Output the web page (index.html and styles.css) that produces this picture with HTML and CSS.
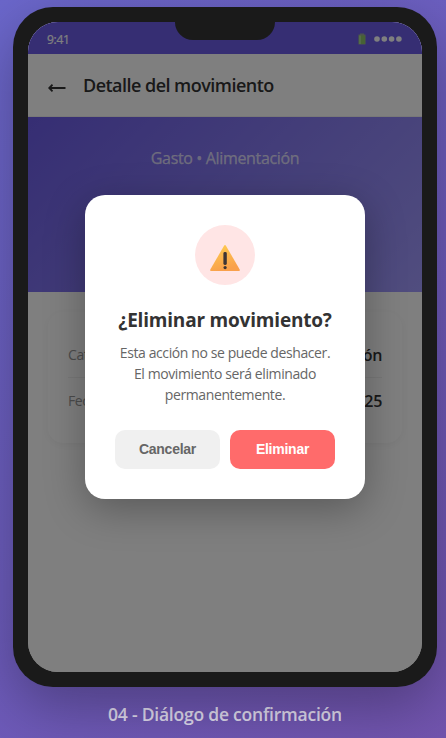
FILE: index.html
```html
<!DOCTYPE html>
<html lang="es">
<head>
<meta charset="utf-8">
<title>Diálogo de confirmación</title>
<link rel="stylesheet" href="styles.css">
</head>
<body>
<div class="phone">
  <div class="notch"></div>
  <div class="screen">
    <div class="status">
      <span class="time">9:41</span>
      <span class="indicators">
        <svg class="battery" width="8" height="12" viewBox="0 0 8 12"><path d="M2 .5h4v1h1.500v10h-7v-10H2z" fill="#98a89c"/><path d="M.8 2.500h6.400v8.500H.8z" fill="#8fc46a"/><path d="M1 2.500h2v8.500H1z" fill="#a9d890"/></svg>
        <svg width="28" height="6" viewBox="0 0 28 6" fill="#fff"><circle cx="3" cy="3" r="2.800"/><circle cx="10.300" cy="3" r="2.800"/><circle cx="17.600" cy="3" r="2.800"/><circle cx="24.900" cy="3" r="2.800"/></svg>
      </span>
    </div>
    <div class="header">
      <svg class="back" width="18" height="10" viewBox="0 0 18 10" fill="none" stroke="#333" stroke-width="1.900"><path d="M1.500 5H17.500M4.500 1.700L1.300 5l3.200 3.300"/></svg>
      <span class="title">Detalle del movimiento</span>
    </div>
    <div class="hero"><span class="kind">Gasto • Alimentación</span></div>
    <div class="content">
      <div class="card">
        <div class="row"><span class="label">Categoría</span><span class="value">Alimentación</span></div>
        <div class="row"><span class="label">Fecha</span><span class="value">15/01/2025</span></div>
      </div>
    </div>
    <div class="overlay">
      <div class="modal">
        <div class="icon">
          <svg width="32" height="28" viewBox="0 0 32 28">
            <defs><linearGradient id="warn" x1="0" y1="0" x2=".35" y2="1"><stop offset="0" stop-color="#ffcf4f"/><stop offset="1" stop-color="#f9a04b"/></linearGradient></defs>
            <path d="M15.200 1.500Q16 .3 16.800 1.500L30.700 25.500Q31.300 27 30 27H2Q.7 27 1.300 25.500Z" fill="url(#warn)"/>
            <rect x="14.400" y="8" width="3.400" height="13" rx="1.400" fill="#3d3535"/><circle cx="16.100" cy="23.600" r="1.600" fill="#3d3535"/>
          </svg>
        </div>
        <div class="question">¿Eliminar movimiento?</div>
        <p class="message">Esta acción no se puede deshacer.<br>El movimiento será eliminado<br>permanentemente.</p>
        <div class="actions"><button class="cancel">Cancelar</button><button class="delete">Eliminar</button></div>
      </div>
    </div>
  </div>
</div>
<div class="caption">04 - Diálogo de confirmación</div>
</body>
</html>
```
FILE: styles.css
```css
* { box-sizing: border-box; }
body {
  margin: 0;
  height: 738px;
  padding: 7px 9px 0 13px;
  overflow: hidden;
  font-family: "Open Sans", "Noto Sans", sans-serif;
  background: linear-gradient(135deg, #6b67cb 0%, #6c5cbc 50%, #7254ae 100%);
}
.phone {
  position: relative;
  width: 424px;
  height: 680px;
  padding: 15px;
  border-radius: 40px;
  background: #1a1a1a;
  box-shadow: 0 20px 60px rgba(0, 0, 0, .3);
}
.notch {
  position: absolute;
  z-index: 2;
  top: 15px;
  left: 162px;
  width: 100px;
  height: 18px;
  border-radius: 0 0 20px 20px;
  background: #1a1a1a;
}
.screen {
  position: relative;
  height: 650px;
  overflow: hidden;
  border-radius: 30px;
  background: #fff;
}
.status {
  display: flex;
  align-items: center;
  justify-content: space-between;
  height: 32px;
  padding: 2px 20px 0 19px;
  color: #fff;
  font-size: 12px;
  background: #6c5ce7;
}
.time { letter-spacing: -.3px; -webkit-text-stroke: .2px #fff; }
.indicators { display: flex; align-items: center; gap: 8px; }
.header {
  display: flex;
  align-items: center;
  height: 63px;
  padding: 0 20px;
  gap: 17px;
  border-bottom: 1px solid #f0f0f0;
}
.back { margin: 5px 0 0; }
.title { color: #333; font-size: 18px; font-weight: 600; letter-spacing: -.53px; }
.hero {
  height: 175px;
  padding-top: 30px;
  text-align: center;
  font-size: 16px;
  line-height: 22px;
  letter-spacing: -.35px;
  color: rgba(255, 255, 255, .7);
  background: linear-gradient(135deg, #6c5ce7, #a29bfe);
}
.kind { -webkit-text-stroke: .25px rgba(255, 255, 255, .7); }
.content { padding: 20px; }
.card {
  height: 131px;
  padding: 20px;
  border-radius: 15px;
  background: #fff;
  box-shadow: 0 2px 10px rgba(0, 0, 0, .05);
}
.row { display: flex; align-items: center; justify-content: space-between; height: 45px; }
.row + .row { height: 47px; border-top: 1px solid #f0f0f0; }
.label { margin-top: -1px; color: #999; font-size: 14px; letter-spacing: -.4px; }
.row + .row .label { margin-top: -2px; }
.value { color: #333; font-size: 16px; font-weight: 600; letter-spacing: -.3px; }
.overlay {
  position: absolute;
  inset: 0;
  display: flex;
  align-items: center;
  justify-content: center;
  background: rgba(0, 0, 0, .5);
}
.modal {
  width: 280px;
  height: 304px;
  padding: 30px;
  border-radius: 20px;
  text-align: center;
  background: #fff;
  box-shadow: 0 10px 40px rgba(0, 0, 0, .3);
}
.icon {
  display: flex;
  align-items: center;
  justify-content: center;
  width: 60px;
  height: 60px;
  margin: 0 auto 21px;
  padding-top: 6px;
  border-radius: 50%;
  background: #ffe5e5;
}
.question { color: #333; font-size: 19px; font-weight: 700; line-height: 28px; letter-spacing: -.2px; white-space: nowrap; }
.message { margin: 8px 0 25px; color: #666; font-size: 14px; line-height: 21px; letter-spacing: -.4px; white-space: nowrap; }
.actions { display: flex; gap: 10px; }
button {
  flex: 1;
  height: 39px;
  padding: 0 0 1px;
  border: 0;
  border-radius: 10px;
  font: bold 14px "Liberation Sans", sans-serif;
  letter-spacing: -.25px;
}
.cancel { color: #666; background: #f0f0f0; }
.delete { color: #fff; background: #ff6b6b; }
.caption {
  margin-top: 14px;
  color: rgba(255, 255, 255, .8);
  text-align: center;
  font-size: 17.5px;
  font-weight: 600;
  line-height: 26px;
  letter-spacing: -.22px;
}
```
